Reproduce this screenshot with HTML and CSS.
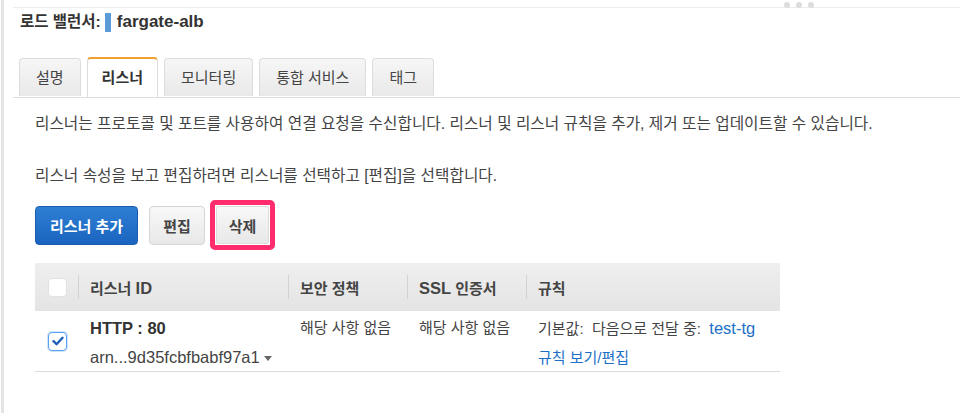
FILE: index.html
```html
<!DOCTYPE html>
<html lang="ko">
<head>
<meta charset="UTF-8">
<title>로드 밸런서 – 리스너</title>
<meta name="viewport" content="width=device-width, initial-scale=1.0">
<link rel="stylesheet" href="styles.css">
</head>
<body>
 <div class="panel">
  <div class="grip"><span></span><span></span><span></span></div>

  <h2 class="title">로드 밸런서: <span class="mark"></span><span class="lat">fargate-alb</span></h2>

  <ul class="tabs">
    <li>설명</li>
    <li class="active">리스너</li>
    <li>모니터링</li>
    <li>통합 서비스</li>
    <li>태그</li>
  </ul>

  <div class="content">
    <p>리스너는 프로토콜 및 포트를 사용하여 연결 요청을 수신합니다. 리스너 및 리스너 규칙을 추가, 제거 또는 업데이트할 수 있습니다.</p>
    <p>리스너 속성을 보고 편집하려면 리스너를 선택하고 [편집]을 선택합니다.</p>

    <div class="actions">
      <button class="btn primary">리스너 추가</button>
      <button class="btn">편집</button>
      <span class="highlight"><button class="btn">삭제</button></span>
    </div>

    <table class="listeners">
      <thead>
        <tr>
          <th class="sel"><span class="check"></span></th>
          <th class="c-id">리스너 <span class="lat">ID</span></th>
          <th class="c-pol">보안 정책</th>
          <th class="c-ssl"><span class="lat">SSL</span> 인증서</th>
          <th>규칙</th>
        </tr>
      </thead>
      <tbody>
        <tr>
          <td class="sel">
            <span class="check on">
              <svg width="12" height="10" viewBox="0 0 12 10"><path d="M1.5 5.2 4.6 8.2 10.5 1.8" fill="none" stroke="#1f5fb8" stroke-width="2.4" stroke-linecap="round" stroke-linejoin="round"/></svg>
            </span>
          </td>
          <td>
            <div class="proto lat">HTTP : 80</div>
            <div class="arn lat">arn...9d35fcbfbabf97a1 <span class="caret"></span></div>
          </td>
          <td>해당 사항 없음</td>
          <td>해당 사항 없음</td>
          <td>
            <div>기본값:&nbsp; 다음으로 전달 중:&nbsp; <a class="lat" href="#">test-tg</a></div>
            <div class="rules"><a href="#">규칙 보기/편집</a></div>
          </td>
        </tr>
      </tbody>
    </table>
  </div>
 </div>
</body>
</html>
```

FILE: styles.css
```css
body{margin:0;background:#fff;font-family:"Liberation Sans","Noto Sans CJK KR",sans-serif;color:#444;font-size:15px}
.panel{position:relative;border-left:3px solid #e4e4e4;margin-left:1px;min-height:413px;box-sizing:border-box;padding-top:7px}
.panel:before{content:"";display:block;margin-left:9px;border-top:1px solid #ececec}
.grip{position:absolute;top:2px;left:780px;display:flex;gap:6px}
.grip span{width:6px;height:6px;border-radius:50%;background:#dcdcdc}
.title{margin:1px 0 0 16px;font-size:15.5px;font-weight:bold;color:#333;line-height:26px;display:flex;align-items:center}
.title .lat{font-size:17px}
.mark{display:inline-block;width:6px;height:19px;background:#5a9ad6;margin:0 6px 0 4px}
.tabs{list-style:none;margin:23px 0 0 9px;padding:0 0 0 6px;display:flex;gap:6px;border-bottom:1px solid #dedede;height:39px}
.tabs li{height:38px;line-height:38px;padding:0 16px;box-sizing:border-box;border:1px solid #ddd;border-bottom:none;border-radius:4px 4px 0 0;background:linear-gradient(#f6f6f6,#e9e9e9);color:#444;font-size:15px}
.tabs li.active{background:#fff;height:40px;margin-top:-1px;border-top:2px solid #f0a030;color:#333;font-weight:bold;padding:0 14px}
.content{padding:0 0 0 31px}
.content p{margin:0;line-height:20px;font-size:15.7px}
.content p:first-child{margin-top:16px}
.content p+p{margin-top:32px}
.actions{display:flex;align-items:center;margin-top:14px}
.btn{font-family:inherit;font-size:15px;font-weight:bold;height:39px;padding:0 13px;border:1px solid #d5d5d5;border-radius:4px;background:linear-gradient(#f8f8f8,#e8e8e8);color:#444}
.btn.primary{background:linear-gradient(#2e7fd4,#1a64bf);border-color:#1a5cae;color:#fff;padding:0 14px}
.actions .btn+.btn{margin-left:11px}
.highlight{display:inline-block;margin-left:5px;border:5px solid #ff2d6e;border-radius:5px;padding:1px;background:#fff}
.highlight .btn{height:38px;padding:0 12px;border-color:#dcdcdc;border-radius:2px}
.listeners{margin-top:13px;border-collapse:collapse;width:745px;font-size:15px}
.listeners th{background:linear-gradient(#efefef,#e4e4e4);height:48px;text-align:left;font-weight:bold;color:#444;padding:0 12px;position:relative}
.listeners th+th:before{content:"";position:absolute;left:0;top:12px;bottom:12px;border-left:1px solid #d2d2d2}
.listeners td{vertical-align:top;padding:7px 12px 0;height:53px;border-bottom:1px solid #dcdcdc;line-height:20px}
.listeners .sel{width:43px;padding:0 0 0 13px;box-sizing:border-box}
.listeners td.sel{padding-top:19px}
.c-id{width:186px}
.c-pol{width:95px}
.c-ssl{width:95px}
.lat{font-size:16.5px}
.check{display:inline-flex;align-items:center;justify-content:center;width:17px;height:17px;background:#fff;border-radius:4px;border:1px solid #e2e2e2;vertical-align:middle}
.check.on{border:1px solid #5aa0f0;box-shadow:0 0 0 1px #cfe3fb}
.proto{font-weight:bold;color:#333}
.arn{margin-top:9px}
.caret{display:inline-block;width:0;height:0;border-left:4px solid transparent;border-right:4px solid transparent;border-top:5px solid #666;vertical-align:middle}
.rules{margin-top:9px}
a{color:#1d6fc8;text-decoration:none}
```
